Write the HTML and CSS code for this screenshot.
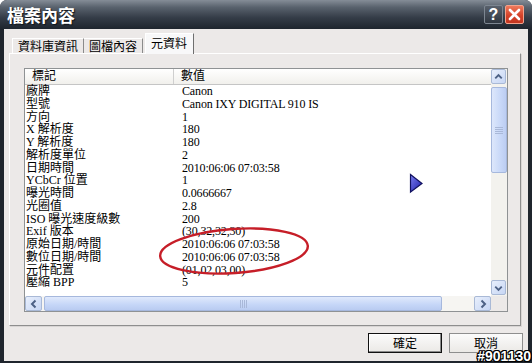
FILE: index.html
```html
<!DOCTYPE html>
<html>
<head>
<meta charset="utf-8">
<link rel="stylesheet" href="styles.css">
</head>
<body>
<div class="window">
  <div class="titlebar">
    <span class="title">檔案內容</span>
    <div class="tb-btns">
      <span class="tb-btn help">?</span>
      <span class="tb-btn close"><svg width="13" height="13" viewBox="0 0 13 13"><path d="M2 2 L11 11 M11 2 L2 11" stroke="#fff" stroke-width="2.6" stroke-linecap="round"/></svg></span>
    </div>
  </div>
  <div class="body">
    <div class="tabs">
      <div class="tab first">資料庫資訊</div>
      <div class="tab">圖檔內容</div>
      <div class="tab active">元資料</div>
    </div>
    <div class="panel">
      <div class="listbox">
        <div class="list">
          <div class="header"><span class="h1">標記</span><span class="h2">數值</span></div>
          <div class="row"><span class="k">廠牌</span><span class="v">Canon</span></div>
          <div class="row"><span class="k">型號</span><span class="v">Canon IXY DIGITAL 910 IS</span></div>
          <div class="row"><span class="k">方向</span><span class="v">1</span></div>
          <div class="row"><span class="k">X 解析度</span><span class="v">180</span></div>
          <div class="row"><span class="k">Y 解析度</span><span class="v">180</span></div>
          <div class="row"><span class="k">解析度單位</span><span class="v">2</span></div>
          <div class="row"><span class="k">日期時間</span><span class="v">2010:06:06 07:03:58</span></div>
          <div class="row"><span class="k">YCbCr 位置</span><span class="v">1</span></div>
          <div class="row"><span class="k">曝光時間</span><span class="v">0.0666667</span></div>
          <div class="row"><span class="k">光圈值</span><span class="v">2.8</span></div>
          <div class="row"><span class="k">ISO 曝光速度級數</span><span class="v">200</span></div>
          <div class="row"><span class="k">Exif 版本</span><span class="v">(30,32,32,30)</span></div>
          <div class="row"><span class="k">原始日期/時間</span><span class="v">2010:06:06 07:03:58</span></div>
          <div class="row"><span class="k">數位日期/時間</span><span class="v">2010:06:06 07:03:58</span></div>
          <div class="row"><span class="k">元件配置</span><span class="v">(01,02,03,00)</span></div>
          <div class="row"><span class="k">壓縮 BPP</span><span class="v">5</span></div>
        </div>
        <div class="vscroll">
          <div class="sbtn"><svg width="14" height="14" viewBox="0 0 14 14"><polyline points="3.5,8.5 7,5 10.5,8.5" fill="none" stroke="#4d6185" stroke-width="2"/></svg></div>
          <div class="vthumb"><svg width="8" height="8" viewBox="0 0 8 8"><path d="M0 1.5H8M0 3.5H8M0 5.5H8M0 7.5H8" stroke="#a9b8d8" stroke-width="1"/></svg></div>
          <div class="vtrack"></div>
          <div class="sbtn"><svg width="14" height="14" viewBox="0 0 14 14"><polyline points="3.5,5.5 7,9 10.5,5.5" fill="none" stroke="#4d6185" stroke-width="2"/></svg></div>
        </div>
        <div class="hscroll">
          <div class="sbtn hb"><svg width="14" height="14" viewBox="0 0 14 14"><polyline points="8.5,3.5 5,7 8.5,10.5" fill="none" stroke="#4d6185" stroke-width="2"/></svg></div>
          <div class="hthumb"><svg width="8" height="8" viewBox="0 0 8 8"><path d="M1.5 0V8M3.5 0V8M5.5 0V8M7.5 0V8" stroke="#a9b8d8" stroke-width="1"/></svg></div>
          <div class="htrack"></div>
          <div class="sbtn hb"><svg width="14" height="14" viewBox="0 0 14 14"><polyline points="5.5,3.5 9,7 5.5,10.5" fill="none" stroke="#4d6185" stroke-width="2"/></svg></div>
        </div>
        <div class="corner"></div>
      </div>
    </div>
    <div class="buttons">
      <div class="btn default">確定</div>
      <div class="btn">取消</div>
    </div>
  </div>
  <svg class="ellipse" width="170" height="60" viewBox="0 0 170 60"><ellipse cx="78" cy="30" rx="74" ry="22" transform="rotate(-4 78 30)" fill="none" stroke="#c61e28" stroke-width="2.4"/></svg>
  <svg class="cursor" width="15" height="21" viewBox="0 0 15 21"><defs><linearGradient id="cg" x1="0" y1="0" x2="1" y2="1"><stop offset="0" stop-color="#7a7ef0"/><stop offset="1" stop-color="#1c1ca8"/></linearGradient></defs><polygon points="1.5,1.5 13,10.5 1.5,19" fill="url(#cg)" stroke="#121260" stroke-width="1.2"/></svg>
  <div class="watermark">#901130</div>
</div>
</body>
</html>
```
FILE: styles.css
```css
html, body {
  margin: 0;
  padding: 0;
  background: #ffffff;
}
body {
  width: 532px;
  height: 363px;
  overflow: hidden;
  font-family: "Noto Sans CJK TC", "Liberation Sans", sans-serif;
}
.window {
  position: relative;
  width: 532px;
  height: 363px;
  display: flex;
  flex-direction: column;
  background: #1f252d;
  border-radius: 7px 7px 0 0;
  overflow: hidden;
}
.titlebar {
  flex: none;
  height: 29px;
  display: flex;
  align-items: center;
  padding: 0 8px 0 7px;
  background: linear-gradient(#858d97 0%, #59626d 25%, #353d48 60%, #1e252e 100%);
}
.title {
  color: #ffffff;
  font-size: 17px;
  font-weight: bold;
  line-height: 20px;
  text-shadow: 1px 1px 1px #10151b;
}
.tb-btns {
  margin-left: auto;
  display: flex;
  gap: 2px;
}
.tb-btn {
  width: 19px;
  height: 19px;
  box-sizing: border-box;
  border-radius: 2px;
  display: flex;
  align-items: center;
  justify-content: center;
}
.help {
  background: linear-gradient(#59616c, #2f3640);
  border: 1px solid #7d8691;
  color: #ffffff;
  font-family: "Liberation Sans", sans-serif;
  font-weight: bold;
  font-size: 16px;
  line-height: 16px;
}
.close {
  background: linear-gradient(#ef7a5c, #d5432a 55%, #c23520);
  border: 1px solid #f2a28c;
}
.body {
  flex: 1;
  margin: 0 4px 2px 4px;
  background: #ece9e8;
  display: flex;
  flex-direction: column;
}
.tabs {
  flex: none;
  height: 24px;
  display: flex;
  align-items: flex-end;
  padding-left: 8px;
  position: relative;
  z-index: 2;
}
.tab {
  height: 15px;
  box-sizing: border-box;
  padding: 0 5px;
  font-size: 12px;
  line-height: 14px;
  color: #000;
  border-top: 1px solid #ffffff;
  border-right: 1px solid #8b8b8b;
}
.tab.first {
  border-left: 1px solid #ffffff;
}
.tab.active {
  height: 21px;
  margin-bottom: -1px;
  padding: 2px 6px 0 5px;
  margin-left: 2px;
  background: #f8f8f9;
  border-left: 1px solid #ffffff;
  border-right: 1px solid #6f6f6f;
}
.panel {
  flex: 1;
  display: flex;
  margin: 0 7px 0 5px;
  padding: 14px 12px 13px 14px;
  border-top: 1px solid #ffffff;
  border-left: 1px solid #ffffff;
  border-right: 1px solid #8e8e8e;
  border-bottom: 1px solid #8e8e8e;
  box-shadow: 1px 1px 0 #d8d5d4;
}
.listbox {
  flex: 1;
  display: grid;
  grid-template-columns: 1fr 16px;
  grid-template-rows: 1fr 15px;
  border: 1px solid #8f9294;
  background: #ffffff;
  overflow: hidden;
}
.list {
  overflow: hidden;
  font-family: "Liberation Serif", "Noto Sans CJK TC", serif;
  font-size: 12px;
  color: #000;
}
.header {
  height: 16px;
  box-sizing: border-box;
  display: flex;
  background: linear-gradient(#ffffff, #f1f0ec);
  border-bottom: 1px solid #c5c5c5;
  line-height: 15px;
}
.h1 {
  width: 149px;
  box-sizing: border-box;
  padding-left: 7px;
  border-right: 1px solid #cfcfcf;
}
.h2 {
  padding-left: 7px;
}
.row {
  display: flex;
  height: 12.75px;
  line-height: 12.75px;
  white-space: nowrap;
}
.row:first-of-type {
  margin-top: 1px;
}
.k {
  width: 157px;
  flex: none;
  padding-left: 1px;
  box-sizing: border-box;
}
.v {
  flex: none;
  letter-spacing: -0.15px;
}
.vscroll {
  display: flex;
  flex-direction: column;
  background: #f3f2ee;
}
.sbtn {
  flex: none;
  width: 15px;
  height: 15px;
  box-sizing: border-box;
  border: 1px solid #a9b9d6;
  border-radius: 2px;
  background: linear-gradient(135deg, #e8effc, #c7d6f4);
  display: flex;
  align-items: center;
  justify-content: center;
}
.vscroll .sbtn {
  margin-bottom: 1px;
}
.vthumb {
  flex: none;
  height: 86px;
  margin-top: 2px;
  box-sizing: border-box;
  border: 1px solid #a6b8dd;
  border-radius: 2px;
  background: linear-gradient(90deg, #dde7fb, #c8d8f8 60%, #bccdf2);
  display: flex;
  align-items: center;
  justify-content: center;
}
.vtrack {
  flex: 1;
}
.hscroll {
  display: flex;
  background: #f6f5f2;
}
.hb {
  width: 17px;
}
.hthumb {
  flex: none;
  width: 398px;
  margin-left: 2px;
  box-sizing: border-box;
  border: 1px solid #a6b8dd;
  border-radius: 2px;
  background: linear-gradient(#e0e9fc, #c5d6f7 60%, #b9cbf1);
  display: flex;
  align-items: center;
  justify-content: center;
}
.htrack {
  flex: 1;
}
.corner {
  background: #ece9e8;
}
.buttons {
  flex: none;
  display: flex;
  justify-content: flex-end;
  gap: 7px;
  padding: 7px 5px 8px 0;
}
.btn {
  width: 74px;
  height: 20px;
  box-sizing: border-box;
  border: 1px solid #8e8e8e;
  background: linear-gradient(#fbfbfb, #ebe9e6);
  font-size: 12px;
  line-height: 17px;
  text-align: center;
  color: #000;
}
.btn.default {
  border: 1px solid #111111;
  box-shadow: inset -1px -1px 0 #8a8a8a, inset 1px 1px 0 #ffffff;
}
.ellipse {
  position: absolute;
  left: 156px;
  top: 221px;
}
.cursor {
  position: absolute;
  left: 409px;
  top: 173px;
}
.watermark {
  position: absolute;
  right: 1px;
  bottom: -1px;
  font-family: "Liberation Sans", sans-serif;
  font-weight: bold;
  font-size: 14px;
  line-height: 16px;
  color: #ffffff;
  text-shadow: -1px -1px 0 #000, 1px -1px 0 #000, -1px 1px 0 #000, 1px 1px 0 #000, 0 1px 0 #000, 0 -1px 0 #000, 1px 0 0 #000, -1px 0 0 #000;
}
```
